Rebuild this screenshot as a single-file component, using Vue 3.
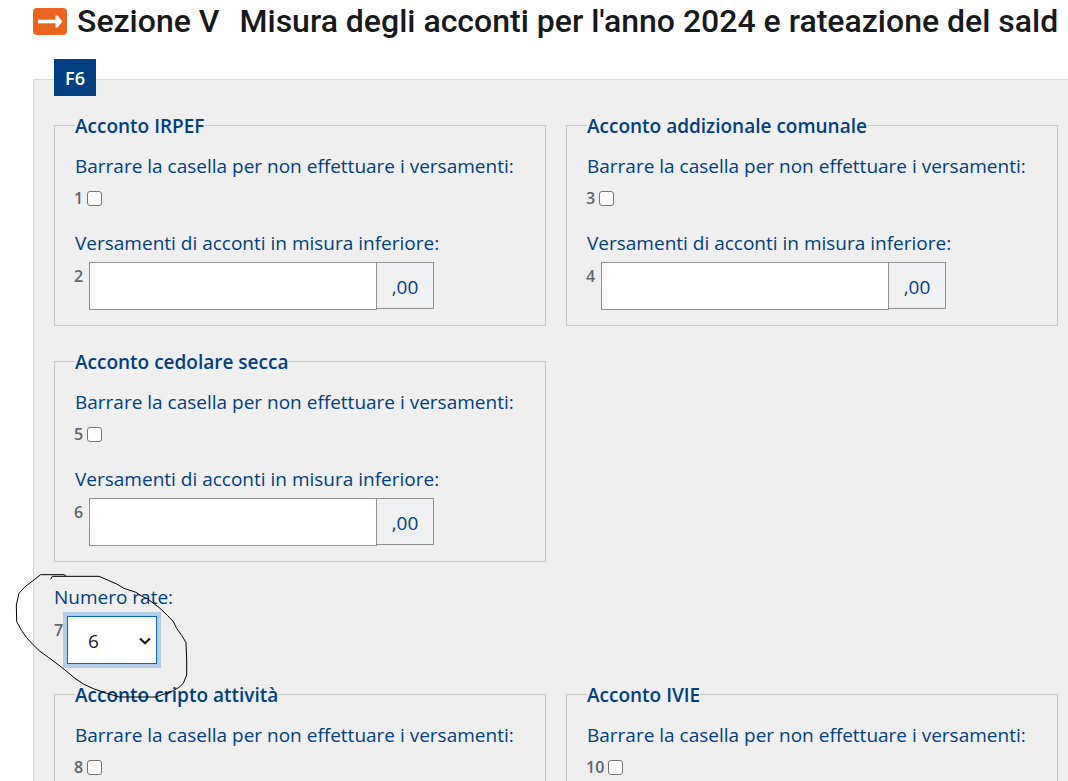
<script setup>
import { ref } from 'vue'

const groups = [
  { title: 'Acconto IRPEF', check: 1, amount: 2 },
  { title: 'Acconto addizionale comunale', check: 3, amount: 4 },
  { title: 'Acconto cedolare secca', check: 5, amount: 6 },
]
const moreGroups = [
  { title: 'Acconto cripto attività', check: 8 },
  { title: 'Acconto IVIE', check: 10 },
]
const rates = ref('6')
</script>

<template>
  <main class="page">
    <h1 class="title">
      <svg class="title-icon" viewBox="0 0 34 27" aria-hidden="true">
        <rect width="34" height="27" rx="4" fill="#ec6520" />
        <path d="M5 13.5H26" fill="none" stroke="#fff" stroke-width="3.600" />
        <path d="M22.500 7.500H24.500L29.500 13.500L24.500 19.500H22.500Z" fill="#fff" />
      </svg>
      <span>Sezione V</span>
      <span class="title-name">Misura degli acconti per l'anno 2024 e rateazione del sald</span>
    </h1>

    <section class="panel">
      <div class="badge">F6</div>

      <div class="grid">
        <fieldset v-for="g in groups" :key="g.check" class="group">
          <legend>{{ g.title }}</legend>
          <label class="label" :for="'f' + g.check">Barrare la casella per non effettuare i versamenti:</label>
          <div class="check-row">
            <span class="num">{{ g.check }}</span>
            <input :id="'f' + g.check" type="checkbox" class="check" />
          </div>
          <label class="label second" :for="'f' + g.amount">Versamenti di acconti in misura inferiore:</label>
          <div class="amount-row">
            <span class="num">{{ g.amount }}</span>
            <input :id="'f' + g.amount" type="text" class="amount" />
            <span class="suffix">,00</span>
          </div>
        </fieldset>
      </div>

      <div class="rates">
        <label class="label" for="f7">Numero rate:</label>
        <div class="rates-row">
          <span class="num">7</span>
          <span class="select-box">
            <select id="f7" v-model="rates" class="select">
              <option>6</option>
            </select>
            <svg class="chevron" viewBox="0 0 12 8" aria-hidden="true">
              <path d="M1 1.500L6 6.300L11 1.500" fill="none" stroke="#1a1a1a" stroke-width="2.200" />
            </svg>
          </span>
        </div>
        <svg class="scribble" viewBox="36 30 540 390" aria-hidden="true">
          <path d="M152 58L157 49H297L325 61L350 72L372 85L390 91L408 97L424 108L440 115L462 131L480 145L502 166L520 185L530 205L545 226L558 248L560 300V345L550 370L537 382L520 392L492 402L468 411H358L320 400L280 386L252 373L225 355L202 336L180 318L145 292L120 274L100 255L80 233L65 212L50 185L49 135L57 100L75 80L98 63L122 44H192L198 47" fill="none" stroke="#000" stroke-width="3" />
        </svg>
      </div>

      <div class="grid">
        <fieldset v-for="g in moreGroups" :key="g.check" class="group tall">
          <legend>{{ g.title }}</legend>
          <label class="label" :for="'f' + g.check">Barrare la casella per non effettuare i versamenti:</label>
          <div class="check-row">
            <span class="num">{{ g.check }}</span>
            <input :id="'f' + g.check" type="checkbox" class="check" />
          </div>
        </fieldset>
      </div>
    </section>
  </main>
</template>

<style>
body {
  margin: 0;
  background: #fff;
}
</style>

<style scoped>
.page {
  box-sizing: border-box;
  height: 100vh;
  overflow: hidden;
  padding-left: 33px;
  font-family: "Open Sans", "Noto Sans", sans-serif;
  font-size: 19px;
  line-height: 24px;
  color: #004080;
}
.title {
  display: flex;
  align-items: center;
  height: 43px;
  margin: 0 0 36px;
  font-family: Roboto, sans-serif;
  font-size: 32px;
  font-weight: 500;
  line-height: 43px;
  white-space: nowrap;
  color: #17191c;
}
.title-icon {
  flex: none;
  width: 34px;
  height: 27px;
  margin-right: 10px;
}
.title-name {
  margin-left: 20px;
}
.panel {
  padding: 0 10px 20px 20px;
  border: 1px solid #d9dadb;
  border-right: 0;
  background: #efefef;
}
.badge {
  width: 42px;
  margin: -21px 0 18px;
  padding-top: 2px;
  background: #004080;
  color: #fff;
  font-size: 18px;
  font-weight: 600;
  line-height: 35px;
  text-align: center;
}
.grid {
  display: grid;
  grid-template-columns: 1fr 1fr;
  gap: 24px 20px;
}
.group {
  min-width: 0;
  margin: 0;
  padding: 17px 19px 15px;
  border: 1px solid #c8c8c8;
}
.tall {
  padding-bottom: 120px;
}
legend {
  margin-left: 1px;
  padding: 2px 0 0;
  font-weight: 600;
  line-height: 21px;
}
.label {
  display: block;
  padding-left: 1px;
  white-space: nowrap;
}
.second {
  margin-top: 21px;
}
.num {
  font-size: 16px;
  font-weight: 600;
  color: #5b6670;
}
.check-row {
  display: flex;
  align-items: center;
  gap: 4px;
  margin-top: 8px;
}
.check {
  appearance: none;
  box-sizing: border-box;
  width: 15px;
  height: 15px;
  margin: 0;
  border: 1px solid #767676;
  border-radius: 3px;
  background: #fff;
}
.amount-row {
  display: flex;
  align-items: flex-start;
  margin-top: 7px;
}
.amount-row .num {
  width: 15px;
  padding-top: 2px;
}
.amount {
  box-sizing: border-box;
  width: 288px;
  height: 48px;
  margin: 0;
  padding: 0 12px;
  border: 1px solid #919191;
  border-radius: 0;
  background: #fff;
  font: inherit;
  color: inherit;
}
.suffix {
  box-sizing: border-box;
  width: 57px;
  height: 47px;
  border: 1px solid #919191;
  border-left: 0;
  background: #eff0f2;
  line-height: 48px;
  text-align: center;
}
.rates {
  position: relative;
  margin: 23px 0 19px;
}
.rates .label {
  padding-left: 0;
}
.rates-row {
  display: flex;
  align-items: flex-start;
  margin-top: 7px;
}
.rates-row .num {
  width: 13px;
  padding-top: 2px;
}
.select-box {
  position: relative;
  width: 90px;
}
.select {
  appearance: none;
  box-sizing: border-box;
  display: block;
  width: 100%;
  height: 48px;
  padding: 2px 20px 0;
  border: 1px solid #0066cc;
  border-radius: 0;
  outline: 0;
  background: #fff;
  box-shadow: 0 0 0 4px #b3cde8;
  font: inherit;
  color: #1a1a1a;
}
.chevron {
  position: absolute;
  top: 21px;
  right: 6px;
  width: 12px;
  height: 8px;
  pointer-events: none;
}
.scribble {
  position: absolute;
  top: -15px;
  left: -42px;
  width: 180px;
  height: 130px;
  pointer-events: none;
}
</style>
